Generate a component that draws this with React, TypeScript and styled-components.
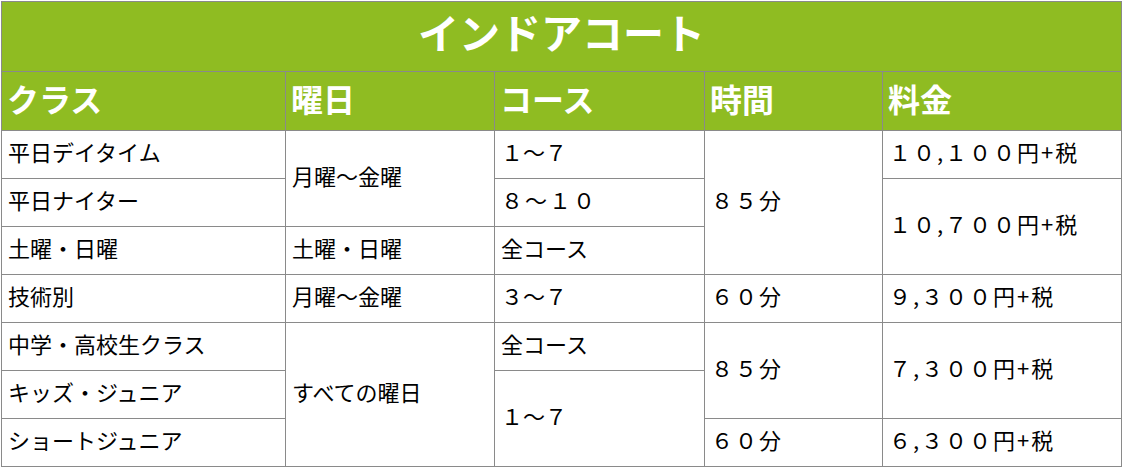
import React from "react";
import styled, { createGlobalStyle } from "styled-components";

const Global = createGlobalStyle`
  html, body { margin: 0; padding: 0; background: #ffffff; }
  body { font-family: "Noto Sans CJK JP", "Noto Sans", sans-serif; }
`;

const GREEN = "#8fbc22";
const LINE = "#8a8a8a";

const Grid = styled.div`
  display: grid;
  grid-template-columns: 283px 208px 209px 177px 238px;
  grid-template-rows: 69px 58px repeat(7, 47px);
  gap: 1px;
  padding: 1px;
  margin: 1px 0 0 1px;
  width: max-content;
  background: ${LINE};
`;

const Title = styled.div`
  grid-column: 1 / span 5;
  background: ${GREEN};
  color: #ffffff;
  font-size: 41px;
  font-weight: 700;
  display: flex;
  align-items: center;
  justify-content: center;
  line-height: 1;
  padding-bottom: 11px;
  box-sizing: border-box;
`;

const Head = styled.div`
  background: ${GREEN};
  color: #ffffff;
  font-size: 32px;
  font-weight: 700;
  display: flex;
  align-items: center;
  padding: 0 0 6px 5px;
  line-height: 1;
  box-sizing: border-box;
`;

const Cell = styled.div<{ $col: number; $row: number; $span?: number; $num?: boolean }>`
  grid-column: ${(p) => p.$col};
  grid-row: ${(p) => p.$row} / span ${(p) => p.$span ?? 1};
  background: #ffffff;
  color: #000000;
  font-size: 22px;
  letter-spacing: ${(p) => (p.$num ? "2px" : "0")};
  display: flex;
  align-items: center;
  padding: 0 0 8px 6px;
  line-height: 1;
  white-space: nowrap;
  box-sizing: border-box;
`;

type C = { col: number; row: number; span?: number; text: string; num?: boolean };

const cells: C[] = [
  { col: 1, row: 3, text: "平日デイタイム" },
  { col: 1, row: 4, text: "平日ナイター" },
  { col: 1, row: 5, text: "土曜・日曜" },
  { col: 1, row: 6, text: "技術別" },
  { col: 1, row: 7, text: "中学・高校生クラス" },
  { col: 1, row: 8, text: "キッズ・ジュニア" },
  { col: 1, row: 9, text: "ショートジュニア" },

  { col: 2, row: 3, span: 2, text: "月曜～金曜" },
  { col: 2, row: 5, text: "土曜・日曜" },
  { col: 2, row: 6, text: "月曜～金曜" },
  { col: 2, row: 7, span: 3, text: "すべての曜日" },

  { col: 3, row: 3, text: "１～７" },
  { col: 3, row: 4, text: "８～１０", num: true },
  { col: 3, row: 5, text: "全コース" },
  { col: 3, row: 6, text: "３～７" },
  { col: 3, row: 7, text: "全コース" },
  { col: 3, row: 8, span: 2, text: "１～７" },

  { col: 4, row: 3, span: 3, text: "８５分", num: true },
  { col: 4, row: 6, text: "６０分", num: true },
  { col: 4, row: 7, span: 2, text: "８５分", num: true },
  { col: 4, row: 9, text: "６０分", num: true },

  { col: 5, row: 3, text: "１０,１００円+税", num: true },
  { col: 5, row: 4, span: 2, text: "１０,７００円+税", num: true },
  { col: 5, row: 6, text: "９,３００円+税", num: true },
  { col: 5, row: 7, span: 2, text: "７,３００円+税", num: true },
  { col: 5, row: 9, text: "６,３００円+税", num: true },
];

const heads = ["クラス", "曜日", "コース", "時間", "料金"];

export default function App() {
  return (
    <>
      <Global />
      <Grid>
        <Title>インドアコート</Title>
        {heads.map((h) => (
          <Head key={h}>{h}</Head>
        ))}
        {cells.map((c, i) => (
          <Cell key={i} $col={c.col} $row={c.row} $span={c.span} $num={c.num}>
            {c.text}
          </Cell>
        ))}
      </Grid>
    </>
  );
}
